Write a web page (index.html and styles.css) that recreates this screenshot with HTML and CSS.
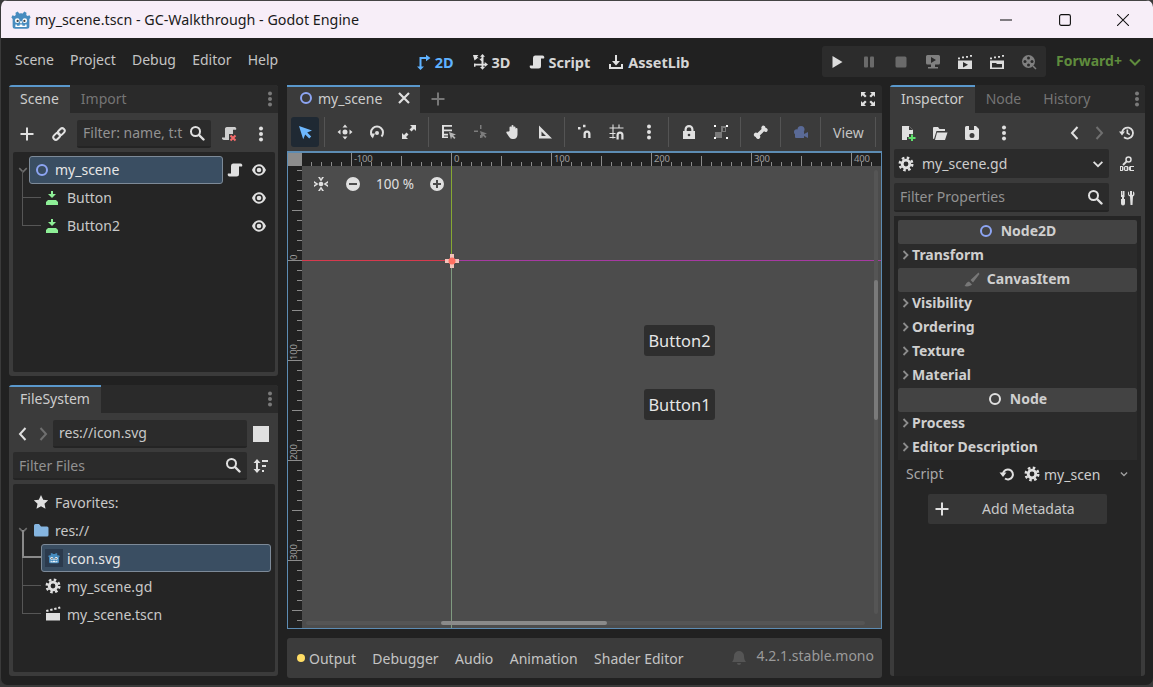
FILE: index.html
```html
<!DOCTYPE html>
<html lang="en">
<head>
<meta charset="utf-8">
<title>my_scene.tscn - GC-Walkthrough - Godot Engine</title>
<link rel="stylesheet" href="styles.css">
</head>
<body>
<svg class="sprite" width="0" height="0">
  <defs>
    <symbol id="plus" viewBox="0 0 16 16"><path d="M7 1.500h2V7h5.500v2H9v5.500H7V9H1.500V7H7z" fill="currentColor"/></symbol>
    <symbol id="link" viewBox="0 0 16 16"><g fill="none" stroke="currentColor" stroke-width="2" transform="rotate(-45 8 8)"><rect x="1" y="5.500" width="7.500" height="5" rx="2.500"/><rect x="7.500" y="5.500" width="7.500" height="5" rx="2.500"/></g></symbol>
    <symbol id="search" viewBox="0 0 16 16"><circle cx="6.500" cy="6.500" r="4.500" fill="none" stroke="currentColor" stroke-width="2"/><path d="M10 10l4.500 4.500" stroke="currentColor" stroke-width="2.400" stroke-linecap="round"/></symbol>
    <symbol id="dots" viewBox="0 0 16 16"><circle cx="8" cy="2.500" r="2" fill="currentColor"/><circle cx="8" cy="8" r="2" fill="currentColor"/><circle cx="8" cy="13.500" r="2" fill="currentColor"/></symbol>
    <symbol id="eye" viewBox="0 0 16 16"><path d="M8 2.300c3 0 5.300 2 7 5.700-1.700 3.700-4 5.700-7 5.700S2.700 11.700 1 8c1.700-3.700 4-5.700 7-5.700zm0 1.900A3.800 3.800 0 1 0 8 11.800 3.800 3.800 0 0 0 8 4.200z" fill="currentColor" fill-rule="evenodd"/><circle cx="8" cy="8" r="2.300" fill="currentColor"/></symbol>
    <symbol id="ring" viewBox="0 0 16 16"><circle cx="8" cy="8" r="5" fill="none" stroke="currentColor" stroke-width="2"/></symbol>
    <symbol id="btn" viewBox="0 0 16 16"><path d="M7 1h2v3h3L8 8 4 4h3zM4 10h8l2 2v3H2v-3z" fill="#8eef97"/></symbol>
    <symbol id="script" viewBox="0 0 16 16"><path d="M6 1.500h7.500a2 2 0 0 1 1.500 3h-3V12a2.500 2.500 0 0 1-2.500 2.500H2.500A2 2 0 0 1 1 11.500h3V4a2.500 2.500 0 0 1 2-2.500z" fill="currentColor"/></symbol>
    <symbol id="gear" viewBox="0 0 16 16"><circle cx="8" cy="8" r="6.200" fill="none" stroke="currentColor" stroke-width="2.600" stroke-dasharray="2.500 2.370"/><circle cx="8" cy="8" r="3.800" fill="none" stroke="currentColor" stroke-width="2.800"/></symbol>
    <symbol id="clap" viewBox="0 0 16 16"><path d="M1 7h14v7.500H1zM1 4l2.200-.6.600 2L1.500 6zM5 3l2.300-.6.500 2L5.500 5zM9 2l2.300-.6.500 2L9.500 4zM13 1l2-.5.500 2-2 .5z" fill="currentColor"/></symbol>
    <symbol id="star" viewBox="0 0 16 16"><path d="M8 1l2.200 4.700 5 .6-3.700 3.500 1 5L8 12.300l-4.500 2.500 1-5L.8 6.300l5-.6z" fill="currentColor"/></symbol>
    <symbol id="folder" viewBox="0 0 16 16"><path d="M1 3.500a1.500 1.500 0 0 1 1.500-1.500H6l2 2.500h6a1.500 1.500 0 0 1 1.500 1.500v7A1.500 1.500 0 0 1 14 14.500H2.500A1.500 1.500 0 0 1 1 13z" fill="#85b5e0"/></symbol>
    <symbol id="godot" viewBox="0 0 16 16"><path d="M5.500 1.200l1 1.500a7 7 0 0 1 3 0l1-1.500 1.900.9-.2 1.800 1 .9 1.600-.6.900 1.800-1 1.100V13a2 2 0 0 1-2 2H3.300a2 2 0 0 1-2-2V7.100l-1-1.100.9-1.800 1.600.6 1-.9-.2-1.800z" fill="#478cbf"/><circle cx="5" cy="8.500" r="1.900" fill="#fff"/><circle cx="11" cy="8.500" r="1.900" fill="#fff"/><circle cx="5.300" cy="8.700" r=".9" fill="#414042"/><circle cx="10.700" cy="8.700" r=".9" fill="#414042"/><path d="M7.300 9h1.400v1.500H7.300zM3.500 11.500h1.200v1h2.200v-1h2.200v1h2.200v-1h1.200v2h-9z" fill="#fff"/></symbol>
    <symbol id="select" viewBox="0 0 16 16"><path d="M2 2l13 4.500-4.800 2 4 4-2 2-4-4-2 4.800z" fill="currentColor"/></symbol>
    <symbol id="move" viewBox="0 0 16 16"><path d="M8 .5L10.500 3.500h-5zM8 15.500l2.500-3h-5zM.5 8l3-2.500v5zM15.500 8l-3-2.500v5z" fill="currentColor"/><circle cx="8" cy="8" r="2.500" fill="currentColor"/></symbol>
    <symbol id="rotate" viewBox="0 0 16 16"><path d="M3.500 12.500A6 6 0 1 1 12.500 12.500" fill="none" stroke="currentColor" stroke-width="2"/><path d="M1 9.500h5l-2.200 5z" fill="currentColor"/><circle cx="8" cy="9" r="2" fill="currentColor"/></symbol>
    <symbol id="scale" viewBox="0 0 16 16"><path d="M9 1h6v6l-2-2-2.500 2.500-2-2L11 3zM1 15V9l2 2 2.500-2.500 2 2L5 13l2 2z" fill="currentColor"/></symbol>
    <symbol id="listsel" viewBox="0 0 16 16"><path d="M1 1h10v1.700H3v2.800h8v1.700H3v2.600h4v1.700H3v1h4V14H1z" fill="currentColor"/><path d="M8 8l7 2.500-2.800 1 2.300 2.300-1.200 1.200-2.300-2.300-1 2.800z" fill="#b5b5b5"/></symbol>
    <symbol id="smart" viewBox="0 0 16 16"><path d="M7 1h1.500v4H7zM1 6.500h4V8H1zM7 11h1.500v3H7zM7 7l7 2.500-2.800 1 2.300 2.300-1.200 1.200-2.300-2.300-1 2.800z" fill="currentColor"/></symbol>
    <symbol id="hand" viewBox="0 0 16 16"><path d="M4.500 7V3.500a1 1 0 0 1 2 0V2a1 1 0 0 1 2 0v1.500a1 1 0 0 1 2 0V5a1 1 0 0 1 2 0v5.500c0 2.500-1.500 4.500-4 4.500H7.500c-2 0-2.800-1.200-3.800-2.800L1.500 9c-.6-1 .7-2 1.500-1.200z" fill="currentColor"/></symbol>
    <symbol id="ruler" viewBox="0 0 16 16"><path d="M2 1.500l13 13H2zM4.500 7.500v4.500H9z" fill="currentColor" fill-rule="evenodd"/></symbol>
    <symbol id="snap" viewBox="0 0 16 16"><path d="M1 3h2.500v2.500H1zM6 .8h2.500v2.500H6zM6.500 14V10a3.500 3.500 0 0 1 7 0v4h-2.300v-4a1.200 1.200 0 0 0-2.400 0v4z" fill="currentColor"/></symbol>
    <symbol id="gridsnap" viewBox="0 0 16 16"><path d="M4 .5v14M10 .5v4M.5 4h14M.5 9.500h6M.5 13.500h6" stroke="currentColor" stroke-width="1.100" fill="none"/><path d="M7.500 15.500V11a3.500 3.500 0 0 1 7 0v4.500h-2.200V11a1.300 1.300 0 0 0-2.600 0v4.500z" fill="currentColor"/></symbol>
    <symbol id="lock" viewBox="0 0 16 16"><path d="M8 1a4.500 4.500 0 0 1 4.500 4.500V7H14v8H2V7h1.500V5.500A4.500 4.500 0 0 1 8 1zm0 2.200A2.300 2.300 0 0 0 5.700 5.500V7h4.600V5.500A2.300 2.300 0 0 0 8 3.200z" fill="currentColor" fill-rule="evenodd"/><circle cx="8" cy="11" r="1.300" fill="#3c3c3c"/></symbol>
    <symbol id="group" viewBox="0 0 16 16"><path d="M8 2h5v6H9v6H2V8h6z" fill="#7a7a7a"/><path d="M10 4h2v3h-2z" fill="#3c3c3c"/><path d="M1 1h2v2H1zM13 1h2v2h-2zM13 13h2v2h-2zM1 13h2v2H1z" fill="#fff"/></symbol>
    <symbol id="bone" viewBox="0 0 16 16"><path d="M10.500 1.500a2.300 2.300 0 0 1 2 2.200 2.300 2.300 0 0 1 1.600 3.800 2.200 2.200 0 0 1-3-.2L6.800 11.400a2.300 2.300 0 0 1-.3 3.100A2.300 2.300 0 0 1 2.800 13a2.300 2.300 0 0 1-1.400-3.800 2.200 2.200 0 0 1 3-.2l4.200-4.100a2.300 2.300 0 0 1 1.900-3.400z" fill="currentColor"/></symbol>
    <symbol id="camera" viewBox="0 0 16 16"><circle cx="8" cy="5.500" r="3.500" fill="currentColor"/><circle cx="3.800" cy="8" r="2.800" fill="currentColor"/><path d="M2 8h9v6H3a1 1 0 0 1-1-1zM11 10l4-2v6l-4-2z" fill="currentColor"/></symbol>
    <symbol id="full" viewBox="0 0 16 16"><path d="M1 1h5L4.300 2.700l2.300 2.300-1.600 1.600-2.300-2.300L1 6zM15 1v5l-1.700-1.700L11 6.600 9.400 5l2.300-2.300L10 1zM1 15v-5l1.700 1.700L5 9.400 6.600 11l-2.300 2.300L6 15zM15 15h-5l1.700-1.700L9.400 11 11 9.400l2.300 2.300L15 10z" fill="currentColor"/></symbol>
    <symbol id="d2" viewBox="0 0 16 16"><path d="M4.500 12.500V3H11V.8L15.500 4 11 7.200V5H6.500v7.500H9L5.500 16 2 12.500z" fill="currentColor"/></symbol>
    <symbol id="d3" viewBox="0 0 16 16"><path d="M1 1h5.500L5 2.500 7.800 5.300 9.500 4V2.800H8L10.500 0 13 2.800h-1.500v6.900h1.200V8l3.300 2.500-3.300 2.500v-1.500H11.500v1.500H13l-2.500 2.800L8 13h1.500v-1.500H3.500v1.200H2V9.500h1.500V9.700h6V7.300L6 3.800 2.500 6.500z" fill="currentColor"/></symbol>
    <symbol id="asset" viewBox="0 0 16 16"><path d="M7 1h2v6h3l-4 4.500L4 7h3zM1 10h2v3h10v-3h2v5H1z" fill="currentColor"/></symbol>
    <symbol id="play" viewBox="0 0 16 16"><path d="M3.500 2l10 6-10 6z" fill="currentColor"/></symbol>
    <symbol id="pause" viewBox="0 0 16 16"><rect x="3" y="2.500" width="4" height="11" rx="1" fill="currentColor"/><rect x="9" y="2.500" width="4" height="11" rx="1" fill="currentColor"/></symbol>
    <symbol id="stop" viewBox="0 0 16 16"><rect x="2.500" y="2.500" width="11" height="11" rx="1.500" fill="currentColor"/></symbol>
    <symbol id="remote" viewBox="0 0 16 16"><path d="M2.500 1h11A1.500 1.500 0 0 1 15 2.500V9a1.500 1.500 0 0 1-1.500 1.500H10V13h3v1.500H3V13h3v-2.500H2.500A1.500 1.500 0 0 1 1 9V2.500A1.500 1.500 0 0 1 2.500 1zM6 3v6l5-3z" fill="currentColor" fill-rule="evenodd"/></symbol>
    <symbol id="clapplay" viewBox="0 0 16 16"><path d="M1 6.500h14V15H1zM6 8v5.500l5-2.700z" fill="currentColor" fill-rule="evenodd"/><path d="M1 3.500h2v1.800H1zM5 2.500h2v1.800H5zM9 2h2v1.800H9zM13 1h2v1.800h-2z" fill="currentColor"/></symbol>
    <symbol id="clapfold" viewBox="0 0 16 16"><path d="M1 6.500h14V15H1zM3 9v4.500h10V10H8L7 9z" fill="currentColor" fill-rule="evenodd"/><path d="M1 3.500h2v1.800H1zM5 2.500h2v1.800H5zM9 2h2v1.800H9zM13 1h2v1.800h-2z" fill="currentColor"/></symbol>
    <symbol id="reel" viewBox="0 0 16 16"><circle cx="7.500" cy="7.500" r="6.500" fill="currentColor"/><g fill="#2b2b2b"><circle cx="7.500" cy="4" r="1.500"/><circle cx="7.500" cy="11" r="1.500"/><circle cx="4" cy="7.500" r="1.500"/><circle cx="11" cy="7.500" r="1.500"/></g><path d="M12 12l3 3" stroke="currentColor" stroke-width="1.500"/></symbol>
    <symbol id="chevd" viewBox="0 0 16 16"><path d="M3 5.500l5 5 5-5" fill="none" stroke="currentColor" stroke-width="2"/></symbol>
    <symbol id="chevl" viewBox="0 0 16 16"><path d="M10.500 2L5 8l5.500 6" fill="none" stroke="currentColor" stroke-width="2"/></symbol>
    <symbol id="chevr" viewBox="0 0 16 16"><path d="M5.500 2L11 8l-5.500 6" fill="none" stroke="currentColor" stroke-width="2"/></symbol>
    <symbol id="scriptx" viewBox="0 0 16 16"><path d="M6 1h7.500a1.800 1.800 0 0 1 1.500 2.800h-3V8H8v6H3a2 2 0 0 1-2-2.500h3V4a2.500 2.500 0 0 1 2-3z" fill="#cfcfcf"/><path d="M9.500 9.500l5 5M14.500 9.500l-5 5" stroke="#f56a6a" stroke-width="2"/></symbol>
    <symbol id="sort" viewBox="0 0 16 16"><path d="M4 1L7.500 5H5v6h2.500L4 15 .5 11H3V5H.5zM9 2h6v2H9zM9 7h4v2H9zM9 12h2v2H9z" fill="currentColor"/></symbol>
    <symbol id="newfile" viewBox="0 0 16 16"><path d="M2 1h7l4 4v4H9v3H7v3H2z" fill="currentColor"/><path d="M9 1v4h4" fill="#3c3c3c"/><path d="M11 9.500h2v2.500h2.500v2H13v2h-2v-2H8.500v-2H11z" fill="#5fe06c"/></symbol>
    <symbol id="open" viewBox="0 0 16 16"><path d="M1 3a1 1 0 0 1 1-1h4l1.500 2H13v2H4.500L2 14h-.2A.8.8 0 0 1 1 13.200zM5 7.500h10.500L13 15H3z" fill="currentColor"/></symbol>
    <symbol id="save" viewBox="0 0 16 16"><path d="M2.500 1H12l3 3v9.500a1.500 1.500 0 0 1-1.500 1.500h-11A1.500 1.500 0 0 1 1 13.500v-11A1.500 1.500 0 0 1 2.500 1zM5 1v4h5V1zM8 8a2.500 2.500 0 1 0 0 5 2.500 2.500 0 0 0 0-5z" fill="currentColor" fill-rule="evenodd"/></symbol>
    <symbol id="history" viewBox="0 0 16 16"><path d="M3 8a5.500 5.500 0 1 1 2 4.300" fill="none" stroke="currentColor" stroke-width="1.800"/><path d="M0 6.500h6L3 10.500zM7.500 4.500h1.700v3.200l2 1.300-.8 1.300-2.900-1.800z" fill="currentColor"/></symbol>
    <symbol id="doc" viewBox="0 0 16 16"><circle cx="9.500" cy="3.500" r="2.500" fill="none" stroke="currentColor" stroke-width="1.500"/><path d="M7.500 5.500L4 9" stroke="currentColor" stroke-width="1.800"/><path d="M1 10h2.500l1 1v3l-1 1H1zM2 11v3h1v-3zM6 10h2.500l1 1v3l-1 1H6l-1-1v-3zM6.200 11v3h1.500v-3zM11 10h4v1h-3v3h3v1h-4l-1-1v-3z" fill="currentColor" fill-rule="evenodd"/></symbol>
    <symbol id="tools" viewBox="0 0 16 16"><path d="M2 1h1.500v4H4V1h1.500v6H5v2h1v4.500a2 2 0 0 1-4 0V9h1V7H2zM10 1.300v3.500h1V1h2v3.800h1V1.300a3 3 0 0 1 0 5.200L13.500 15h-2L11 6.500a3 3 0 0 1-1-5.200z" fill="currentColor"/></symbol>
    <symbol id="brush" viewBox="0 0 16 16"><path d="M14.500 1.500L6.500 9 9 11.500 15.500 3zM5 10.500L8 13.500C7 15 3 16 .5 15c1.500-.8 1-3.500 4.500-4.500z" fill="currentColor"/></symbol>
    <symbol id="undo" viewBox="0 0 16 16"><path d="M4 7.500a5 5 0 1 1 2 5" fill="none" stroke="currentColor" stroke-width="2"/><path d="M.5 6.500h7L4 11z" fill="currentColor"/></symbol>
    <symbol id="bell" viewBox="0 0 16 16"><path d="M8 1a5 5 0 0 1 5 5c0 3 1 5 2 6H1c1-1 2-3 2-6a5 5 0 0 1 5-5zM6 13h4a2 2 0 0 1-4 0z" fill="currentColor"/></symbol>
    <symbol id="fit" viewBox="0 0 16 16"><circle cx="8" cy="8" r="2.300" fill="currentColor"/><path d="M5 1h2L8 3l1-2h2L8 5.500zM5 15h2l1-2 1 2h2L8 10.500zM1 5v2l2 1-2 1v2l4.500-3zM15 5v2l-2 1 2 1v2l-4.500-3z" fill="currentColor"/></symbol>
    <symbol id="minus" viewBox="0 0 16 16"><path d="M8 1a7 7 0 1 1 0 14A7 7 0 0 1 8 1zM4 7v2h8V7z" fill="currentColor" fill-rule="evenodd"/></symbol>
    <symbol id="pluscirc" viewBox="0 0 16 16"><path d="M8 1a7 7 0 1 1 0 14A7 7 0 0 1 8 1zM7 4v3H4v2h3v3h2V9h3V7H9V4z" fill="currentColor" fill-rule="evenodd"/></symbol>
    <symbol id="close" viewBox="0 0 16 16"><path d="M3 3l10 10M13 3L3 13" stroke="currentColor" stroke-width="2.200"/></symbol>
    <symbol id="arr" viewBox="0 0 8 12"><path d="M1.500 2l4 4-4 4" fill="none" stroke="currentColor" stroke-width="1.800"/></symbol>
  </defs>
</svg>

<div class="window">
  <header class="titlebar">
    <svg class="logo"><use href="#godot"/></svg>
    <span class="title">my_scene.tscn - GC-Walkthrough - Godot Engine</span>
    <div class="winctl">
      <svg class="wc" viewBox="0 0 14 14"><path d="M0 7h14" stroke="#111" stroke-width="1.200" fill="none"/></svg>
      <svg class="wc" viewBox="0 0 14 14"><rect x=".7" y=".7" width="12.600" height="12.600" rx="2" stroke="#111" stroke-width="1.300" fill="none"/></svg>
      <svg class="wc" viewBox="0 0 14 14"><path d="M0 0l14 14M14 0L0 14" stroke="#111" stroke-width="1.200" fill="none"/></svg>
    </div>
  </header>

  <nav class="menubar">
    <div class="menus"><span>Scene</span><span>Project</span><span>Debug</span><span>Editor</span><span>Help</span></div>
    <div class="modes">
      <span class="mode on"><svg class="ic"><use href="#d2"/></svg>2D</span>
      <span class="mode"><svg class="ic"><use href="#d3"/></svg>3D</span>
      <span class="mode"><svg class="ic"><use href="#script"/></svg>Script</span>
      <span class="mode"><svg class="ic"><use href="#asset"/></svg>AssetLib</span>
    </div>
    <div class="runbar">
      <svg class="ic"><use href="#play"/></svg>
      <svg class="ic dim"><use href="#pause"/></svg>
      <svg class="ic dim"><use href="#stop"/></svg>
      <svg class="ic dim2"><use href="#remote"/></svg>
      <svg class="ic"><use href="#clapplay"/></svg>
      <svg class="ic"><use href="#clapfold"/></svg>
      <svg class="ic dim2"><use href="#reel"/></svg>
    </div>
    <div class="renderer"><span>Forward+</span><svg class="ic"><use href="#chevd"/></svg></div>
  </nav>

  <main class="main">
    <div class="leftcol">
      <section class="dock">
        <div class="tabs">
          <span class="tab on">Scene</span><span class="tab">Import</span>
          <svg class="ic tabmenu"><use href="#dots"/></svg>
        </div>
        <div class="scenebar">
          <svg class="ic sb-plus"><use href="#plus"/></svg>
          <svg class="ic sb-link"><use href="#link"/></svg>
          <div class="input sb-filter"><span class="ph">Filter: name, t:t</span><svg class="ic"><use href="#search"/></svg></div>
          <svg class="ic sb-x"><use href="#scriptx"/></svg>
          <svg class="ic sb-dots"><use href="#dots"/></svg>
        </div>
        <div class="tree">
          <div class="row sel scene-root">
            <svg class="ic chev"><use href="#chevd"/></svg>
            <div class="selbox"><svg class="ic blue"><use href="#ring"/></svg><span>my_scene</span></div>
            <svg class="ic rowscript"><use href="#script"/></svg>
            <svg class="ic eye"><use href="#eye"/></svg>
          </div>
          <div class="row child"><i class="tl"></i><svg class="ic"><use href="#btn"/></svg><span class="grow">Button</span><svg class="ic eye"><use href="#eye"/></svg></div>
          <div class="row child"><i class="tl last"></i><svg class="ic"><use href="#btn"/></svg><span class="grow">Button2</span><svg class="ic eye"><use href="#eye"/></svg></div>
        </div>
      </section>

      <section class="dock">
        <div class="tabs">
          <span class="tab on">FileSystem</span>
          <svg class="ic tabmenu"><use href="#dots"/></svg>
        </div>
        <div class="fspath">
          <svg class="ic nav"><use href="#chevl"/></svg>
          <svg class="ic nav dim"><use href="#chevr"/></svg>
          <div class="input fs-path"><span>res://icon.svg</span></div>
          <i class="swatch"></i>
        </div>
        <div class="fsfilter">
          <div class="input fs-filter"><span class="ph">Filter Files</span><svg class="ic"><use href="#search"/></svg></div>
          <svg class="ic fs-sort"><use href="#sort"/></svg>
        </div>
        <div class="tree fstree">
          <div class="row fs0"><svg class="ic"><use href="#star"/></svg><span>Favorites:</span></div>
          <div class="row fsres"><svg class="ic chev"><use href="#chevd"/></svg><svg class="ic"><use href="#folder"/></svg><span>res://</span></div>
          <div class="row fschild"><i class="tl strong"></i><div class="selbox fsbox"><span class="thumb"><svg class="ic tiny"><use href="#godot"/></svg></span><span>icon.svg</span></div></div>
          <div class="row fschild plain"><i class="tl"></i><svg class="ic"><use href="#gear"/></svg><span>my_scene.gd</span></div>
          <div class="row fschild plain"><i class="tl last"></i><svg class="ic"><use href="#clap"/></svg><span>my_scene.tscn</span></div>
        </div>
      </section>
    </div>

    <div class="centercol">
      <div class="tabs ctabs">
        <span class="tab on scenetab"><svg class="ic blue"><use href="#ring"/></svg>my_scene<svg class="ic closex"><use href="#close"/></svg></span>
        <svg class="ic addtab"><use href="#plus"/></svg>
        <svg class="ic fullbtn"><use href="#full"/></svg>
      </div>
      <div class="vtools">
        <span class="selbtn"><svg class="ic"><use href="#select"/></svg></span>
        <i class="sep"></i>
        <svg class="ic"><use href="#move"/></svg><svg class="ic"><use href="#rotate"/></svg><svg class="ic"><use href="#scale"/></svg>
        <i class="sep"></i>
        <svg class="ic"><use href="#listsel"/></svg><svg class="ic dim2"><use href="#smart"/></svg><svg class="ic"><use href="#hand"/></svg><svg class="ic"><use href="#ruler"/></svg>
        <i class="sep"></i>
        <svg class="ic"><use href="#snap"/></svg><svg class="ic"><use href="#gridsnap"/></svg><svg class="ic"><use href="#dots"/></svg>
        <i class="sep"></i>
        <svg class="ic"><use href="#lock"/></svg><svg class="ic"><use href="#group"/></svg>
        <i class="sep"></i>
        <svg class="ic"><use href="#bone"/></svg>
        <i class="sep"></i>
        <svg class="ic cam"><use href="#camera"/></svg>
        <i class="sep"></i>
        <span class="viewbtn">View</span>
        <i class="sep"></i>
      </div>
      <div class="viewport">
        <i class="corner"></i>
        <div class="ruler-top"><span>-100</span><span>0</span><span>100</span><span>200</span><span>300</span><span>400</span></div>
        <div class="ruler-left"><span>0</span><span>100</span><span>200</span><span>300</span></div>
        <div class="canvas">
          <div class="zoombar">
            <svg class="ic"><use href="#fit"/></svg>
            <svg class="ic"><use href="#minus"/></svg>
            <span class="zoomv">100 %</span>
            <svg class="ic"><use href="#pluscirc"/></svg>
          </div>
          <i class="axis ay-top"></i>
          <i class="axis ay-bot"></i>
          <i class="axis ax-neg"></i>
          <i class="axis ax-pos"></i>
          <svg class="origin" viewBox="0 0 16 16"><path d="M6 1h4v5h5v4h-5v5H6v-5H1V6h5z" fill="#f3c3bb"/><circle cx="8" cy="8" r="3.500" fill="#ff6f61"/></svg>
          <div class="gamebtn b2">Button2</div>
          <div class="gamebtn b1">Button1</div>
          <i class="vscroll"><b></b></i>
          <i class="hscroll"><b></b></i>
        </div>
      </div>
      <div class="bottombar">
        <i class="dot"></i>
        <span class="bt first">Output</span><span class="bt">Debugger</span><span class="bt">Audio</span><span class="bt">Animation</span><span class="bt">Shader Editor</span>
        <svg class="ic bell"><use href="#bell"/></svg>
        <span class="version">4.2.1.stable.mono</span>
      </div>
    </div>

    <section class="dock inspector">
      <div class="tabs">
        <span class="tab on">Inspector</span><span class="tab">Node</span><span class="tab">History</span>
        <svg class="ic tabmenu"><use href="#dots"/></svg>
      </div>
      <div class="insbar">
        <svg class="ic"><use href="#newfile"/></svg><svg class="ic"><use href="#open"/></svg><svg class="ic"><use href="#save"/></svg><svg class="ic"><use href="#dots"/></svg>
        <svg class="ic ins-back"><use href="#chevl"/></svg><svg class="ic dim"><use href="#chevr"/></svg><svg class="ic ins-hist"><use href="#history"/></svg>
      </div>
      <div class="insrow">
        <div class="input objsel"><svg class="ic"><use href="#gear"/></svg><span class="grow">my_scene.gd</span><svg class="ic"><use href="#chevd"/></svg></div>
        <svg class="ic sideic"><use href="#doc"/></svg>
      </div>
      <div class="insrow second">
        <div class="input objfilter"><span class="ph grow">Filter Properties</span><svg class="ic"><use href="#search"/></svg></div>
        <svg class="ic sideic"><use href="#tools"/></svg>
      </div>
      <div class="props">
        <div class="cat"><svg class="ic blue"><use href="#ring"/></svg>Node2D</div>
        <div class="sec"><svg class="arr"><use href="#arr"/></svg>Transform</div>
        <div class="cat"><svg class="ic brushic"><use href="#brush"/></svg>CanvasItem</div>
        <div class="sec"><svg class="arr"><use href="#arr"/></svg>Visibility</div>
        <div class="sec"><svg class="arr"><use href="#arr"/></svg>Ordering</div>
        <div class="sec"><svg class="arr"><use href="#arr"/></svg>Texture</div>
        <div class="sec"><svg class="arr"><use href="#arr"/></svg>Material</div>
        <div class="cat"><svg class="ic"><use href="#ring"/></svg>Node</div>
        <div class="sec"><svg class="arr"><use href="#arr"/></svg>Process</div>
        <div class="sec"><svg class="arr"><use href="#arr"/></svg>Editor Description</div>
        <div class="scriptrow">
          <span class="sname">Script</span>
          <svg class="ic undo"><use href="#undo"/></svg>
          <svg class="ic"><use href="#gear"/></svg>
          <span class="sval">my_scen</span>
          <svg class="ic small"><use href="#chevd"/></svg>
        </div>
        <div class="addmeta"><svg class="ic"><use href="#plus"/></svg><span>Add Metadata</span></div>
      </div>
    </section>
  </main>
</div>
</body>
</html>
```

FILE: styles.css
```css
* { box-sizing: border-box; }
html, body { margin: 0; height: 100%; }
body {
  background: #3a3a3a;
  font-family: "Noto Sans", sans-serif;
  font-size: 14px;
  color: #cdcdcd;
  overflow: hidden;
}
.sprite { position: absolute; }
i { display: block; font-style: normal; }
.ic { width: 16px; height: 16px; flex: none; color: #e0e0e0; display: block; }
.dim { color: #6f6f6f; }
.dim2 { color: #7d7d7d; }
.blue { color: #8da5f3; }
.grow { flex: 1; min-width: 0; }

.window {
  width: 1153px;
  height: 685px;
  background: #212121;
  border-radius: 7px;
  overflow: hidden;
  display: flex;
  flex-direction: column;
  border-left: 1px solid #3a3a3a;
}

.titlebar {
  height: 38px;
  flex: none;
  background: #f7eef8;
  display: flex;
  align-items: center;
  padding-left: 10px;
  border-top: 1px solid #444;
  color: #111;
}
.logo { width: 20px; height: 20px; flex: none; }
.title { margin-left: 4px; font-size: 14.3px; color: #1a1a1a; }
.winctl { margin-left: auto; display: flex; gap: 46.5px; padding-right: 24px; align-items: center; }
.wc { width: 12px; height: 12px; display: block; }

.menubar {
  height: 47px;
  flex: none;
  display: flex;
  align-items: center;
  padding-left: 14px;
}
.menus { display: flex; gap: 16.2px; color: #c4c4c4; margin-top: -4px; }
.modes { display: flex; gap: 18px; margin-left: 136.5px; font-weight: 700; font-size: 14.5px; }
.mode { display: flex; align-items: center; gap: 4px; color: #d6d6d6; }
.mode.on, .mode.on .ic { color: #5fb2ff; }
.runbar {
  display: flex;
  align-items: center;
  gap: 16px;
  height: 31px;
  width: 224px;
  margin-left: auto;
  padding-left: 7px;
  background: #2c2c2c;
  border-radius: 3px;
}
.runbar .ic { color: #dcdcdc; }
.runbar .dim { color: #6a6a6a; }
.runbar .dim2 { color: #808080; }
.renderer { width: 97px; flex: none; display: flex; align-items: center; gap: 5px; margin-left: 10px; color: #5f8c3d; font-weight: 700; }
.renderer span { margin-top: -2px; }
.renderer .ic { color: #5f8c3d; }

.main {
  flex: 1;
  min-height: 0;
  display: flex;
  padding-left: 8px;
  gap: 9px;
}
.leftcol { width: 269px; flex: none; display: flex; flex-direction: column; gap: 9px; }
.dock {
  height: 291px;
  background: #3b3b3b;
  border-radius: 3px;
  display: flex;
  flex-direction: column;
  overflow: hidden;
}
.tabs {
  height: 28px;
  flex: none;
  background: #2a2a2a;
  display: flex;
  align-items: center;
  position: relative;
}
.tab {
  height: 28px;
  padding: 0 11px 2px;
  display: flex;
  align-items: center;
  color: #757575;
}
.tab.on {
  background: #3b3b3b;
  border-top: 2px solid #5a98cc;
  color: #cdcdcd;
  padding-bottom: 4px;
}
.tabmenu { margin-left: auto; color: #7a7a7a; }
.input {
  background: #2b2b2b;
  border-bottom: 2px solid #242424;
  border-radius: 2px;
  display: flex;
  align-items: center;
  height: 28px;
}
.ph { color: #929292; }

.scenebar { height: 39px; flex: none; display: flex; align-items: center; padding: 2px 0 0 10px; }
.sb-link { margin-left: 16px; }
.sb-filter { width: 134px; margin-left: 10px; padding: 0 6px; justify-content: space-between; overflow: hidden; }
.sb-filter .ph { white-space: nowrap; overflow: hidden; width: 102px; }
.sb-x { margin-left: 10px; }
.sb-dots { margin-left: 16px; }

.tree {
  flex: 1;
  margin: 0 3px 4px 4px;
  background: #252525;
  border-radius: 2px;
  padding-top: 4px;
}
.row { height: 28px; display: flex; align-items: center; position: relative; color: #c8c8c8; }
.chev { width: 12px; height: 12px; color: #6e6e6e; }
.scene-root { padding-left: 4px; }
.selbox {
  height: 28px;
  background: #3a4e62;
  border: 1px solid #7d8a98;
  border-radius: 3px;
  display: flex;
  align-items: center;
  gap: 5px;
  color: #e6e6e6;
  padding-left: 4px;
}
.scene-root .selbox { width: 194px; }
.scene-root span, .child span { margin-top: -2px; }
.rowscript { margin-left: 4px; }
.eye { margin-left: 8px; }
.child { padding: 0 8px 0 31px; gap: 7px; }
.tl { position: absolute; left: 9px; width: 19px; top: -14px; height: 28px; border-left: 1px solid #565656; border-bottom: 1px solid #565656; }

.fspath { height: 39px; flex: none; display: flex; align-items: center; padding: 2px 0 0 6px; gap: 4px; }
.fs-path { width: 194px; padding-left: 6px; color: #c8c8c8; margin-left: -2px; }
.swatch { width: 16px; height: 16px; background: #e0e0e0; margin-left: 2px; }
.fsfilter { height: 28px; flex: none; display: flex; align-items: center; padding-left: 4px; }
.fs-filter { width: 234px; padding: 0 6px; justify-content: space-between; }
.fs-sort { margin-left: 6px; }
.fstree { margin-top: 4px; }
.fs0 { padding-left: 20px; gap: 6px; }
.fsres { padding-left: 4px; }
.fsres .ic:nth-child(2) { margin: 0 6px 0 4px; }
.fschild { padding-left: 28px; }
.fsbox { width: 230px; }
.thumb { width: 16px; height: 16px; background: #2b3a4d; display: flex; align-items: center; justify-content: center; outline: 1px solid #2b3a4d; }
.tiny { width: 12px; height: 12px; }
.plain { padding-left: 32px; gap: 6px; }
.tl.strong { border-left: 2px solid #8a8a8a; border-bottom: 2px solid #8a8a8a; }

.centercol { width: 595px; flex: none; display: flex; flex-direction: column; margin-right: -1px; }
.ctabs { border-radius: 3px 3px 0 0; }
.scenetab { width: 133px; flex: none; gap: 4px; }
.scenetab .closex { margin-left: 10px; }
.addtab { margin-left: 10px; color: #777; }
.fullbtn { margin-left: auto; margin-right: 6px; }
.vtools {
  height: 38px;
  flex: none;
  background: #3b3b3b;
  display: flex;
  align-items: center;
  padding-left: 4px;
}
.vtools .ic + .ic { margin-left: 16px; }
.vtools .sep { width: 1px; height: 30px; flex: none; background: #545454; margin: 0 12px 0 11px; }
.selbtn { width: 28px; height: 30px; flex: none; background: #1f2933; border-radius: 3px; display: flex; align-items: center; justify-content: center; margin-right: -6px; }
.selbtn .ic { color: #6db8ff; }
.cam { color: #5a6a96; }
.viewbtn { color: #c4c4c4; flex: none; }

.viewport {
  height: 478px;
  flex: none;
  border: 1px solid #5d8cb3;
  border-top-width: 2px;
  display: grid;
  grid-template-columns: 14px 1fr;
  grid-template-rows: 13px 1fr;
  background: #4c4c4c;
  overflow: hidden;
}
.corner { background: #8c8c8c; }
.ruler-top {
  background-color: #212121;
  display: flex;
  padding-left: 49px;
  overflow: hidden;
  background-image:
    linear-gradient(90deg, #8c8c8c 1px, transparent 1px),
    linear-gradient(90deg, #8c8c8c 1px, transparent 1px),
    linear-gradient(90deg, #8c8c8c 1px, transparent 1px);
  background-size: 100px 13px, 50px 10px, 10px 4px;
  background-position: 49px 0, 49px 3px, 9px 9px;
  background-repeat: repeat-x;
}
.ruler-top span {
  flex: none;
  width: 100px;
  padding-left: 3px;
  font-size: 9.5px;
  line-height: 12px;
  color: #9d9d9d;
  letter-spacing: -.2px;
}
.ruler-left {
  background-color: #212121;
  display: flex;
  flex-direction: column;
  overflow: hidden;
  background-image:
    linear-gradient(#8c8c8c 1px, transparent 1px),
    linear-gradient(#8c8c8c 1px, transparent 1px),
    linear-gradient(#8c8c8c 1px, transparent 1px);
  background-size: 14px 100px, 10px 50px, 5px 10px;
  background-position: 0 94px, 4px 44px, 9px 4px;
  background-repeat: repeat-y;
}
.ruler-left span {
  flex: none;
  height: 100px;
  writing-mode: vertical-rl;
  transform: rotate(180deg);
  font-size: 9.5px;
  line-height: 12px;
  color: #9d9d9d;
  padding-left: 2px;
  letter-spacing: -.2px;
}
.ruler-left span:first-child { height: 94px; }
.canvas { position: relative; overflow: hidden; }
.zoombar { position: absolute; left: 11px; top: 10px; display: flex; align-items: center; height: 16px; gap: 16px; }
.zoomv { width: 38px; margin: -1px -1px 0; text-align: center; color: #e0e0e0; font-size: 13.5px; white-space: nowrap; }
.axis { position: absolute; }
.ay-top { left: 149px; top: 0; width: 1px; height: 94px; background: #86a832; }
.ay-bot { left: 149px; top: 95px; bottom: 0; width: 1px; background: #7f9a80; }
.ax-neg { left: 0; width: 149px; top: 94px; height: 1px; background: #d63a4e; }
.ax-pos { left: 150px; right: 0; top: 94px; height: 1px; background: #a63aa2; }
.origin { position: absolute; left: 142px; top: 87px; width: 16px; height: 16px; }
.gamebtn {
  position: absolute;
  left: 342px;
  width: 71px;
  height: 31px;
  background: #2e2e2e;
  border-radius: 3px;
  color: #e6e6e6;
  font-size: 16.4px;
  display: flex;
  align-items: center;
  justify-content: center;
}
.b2 { top: 159px; }
.b1 { top: 223px; }
.vscroll { position: absolute; right: 3px; top: 4px; bottom: 14px; width: 4px; background: #555; border-radius: 2px; }
.vscroll b { display: block; margin-top: 110px; height: 140px; background: #7a7a7a; border-radius: 2px; }
.hscroll { position: absolute; left: 4px; right: 16px; bottom: 3px; height: 4px; background: #555; border-radius: 2px; }
.hscroll b { display: block; margin-left: 135px; width: 166px; height: 4px; background: #8a8a8a; border-radius: 2px; }

.bottombar {
  margin-top: 9px;
  height: 40px;
  flex: none;
  background: #3b3b3b;
  border-radius: 3px;
  display: flex;
  align-items: center;
  padding-left: 10px;
}
.dot { width: 8px; height: 8px; border-radius: 50%; background: #ffdd65; margin-right: 4px; }
.bt { margin-left: 16.4px; color: #c4c4c4; }
.bt.first { margin-left: 0; }
.bell { margin-left: auto; color: #555; }
.version { margin: -6px 8px 0 10px; color: #9a9a9a; }

.inspector { width: 255px; flex: none; height: 591px; }
.insbar { height: 36px; flex: none; display: flex; align-items: center; padding: 4px 0 0 10px; gap: 16px; }
.ins-back { margin-left: 39px; }
.ins-back + .ic { margin-left: -8px; }
.ins-hist { margin-left: -4px; }
.insrow { display: flex; align-items: center; height: 29px; padding-left: 4px; flex: none; }
.insrow.second { margin-top: 5px; }
.objsel { width: 215px; height: 29px; padding: 0 4px; gap: 8px; border-bottom: 0; }
.objsel .ic:last-child { width: 14px; height: 14px; }
.objfilter { width: 215px; height: 29px; padding: 0 6px; }
.sideic { margin-left: 10px; }
.props {
  flex: 1;
  margin: 4px 4px 0;
  background: #252525;
  padding: 4px 4px 0;
  font-weight: 700;
  min-height: 0;
}
.cat {
  height: 24px;
  background: #434343;
  border-radius: 2px;
  display: flex;
  align-items: center;
  justify-content: center;
  gap: 7px;
  color: #cfcfcf;
  padding: 0 1px 3px 0;
}
.brushic { color: #777; }
.sec { height: 24px; background: #2b2b2b; display: flex; align-items: center; color: #cfcfcf; padding: 0 0 3px 4px; gap: 2px; }
.arr { width: 8px; height: 12px; color: #8c8c8c; flex: none; }
.scriptrow { height: 30px; display: flex; align-items: center; font-weight: 400; padding: 0 0 2px 8px; }
.sname { width: 93px; color: #a8a8a8; margin-top: -2px; }
.undo { margin-right: 9px; }
.sval { margin-left: 4px; color: #cdcdcd; width: 75px; }
.small { width: 10px; height: 10px; color: #a0a0a0; }
.addmeta {
  margin: 4px 0 0 30px;
  width: 179px;
  height: 30px;
  background: #363636;
  border-radius: 2px;
  display: flex;
  align-items: center;
  padding-left: 6px;
  font-weight: 400;
  color: #c8c8c8;
}
.addmeta span { margin: -2px 0 0 32px; }
```
